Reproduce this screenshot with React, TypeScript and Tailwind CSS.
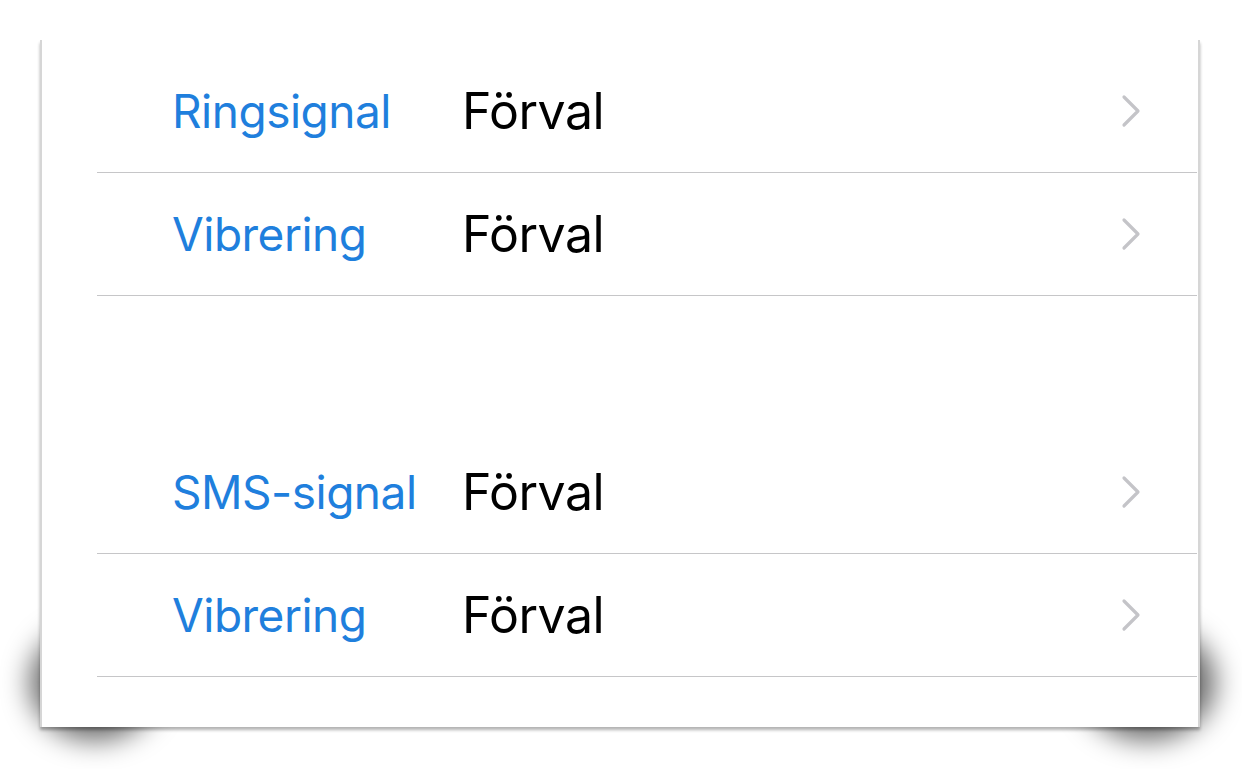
import React from "react";

const Chevron = () => (
  <svg width="26" height="36" viewBox="0 0 26 36" className="shrink-0">
    <path d="M7 4 L21 18 L7 32" fill="none" stroke="#c4c4c8" strokeWidth="3.2" strokeLinecap="round" strokeLinejoin="round" />
  </svg>
);

const Row = ({ label }: { label: string }) => (
  <div className="flex items-center h-[123px] pl-[75px] pr-[54px] border-b border-[#c6c6c8]">
    <span className="w-[290px] text-[#1f7fdd] text-[46px] tracking-[-0.5px]">{label}</span>
    <span className="flex-1 text-black text-[50px] tracking-[-0.5px]">Förval</span>
    <Chevron />
  </div>
);

export default function App() {
  return (
    <div
      className="relative w-[1242px] h-[769px] bg-white overflow-hidden"
      style={{ fontFamily: "Inter, 'Noto Sans', sans-serif" }}
    >
      {/* curled page shadows */}
      <div className="absolute left-[30px] top-[625px] w-[130px] h-[115px] rounded-[50%] bg-black/60 blur-[14px]" />
      <div className="absolute left-[1080px] top-[625px] w-[135px] h-[115px] rounded-[50%] bg-black/60 blur-[14px]" />
      <div className="relative ml-[40px] mt-[40px] w-[1160px] h-[687px] bg-white border-l-[2px] border-r-[2px] border-[#d6d6d6] shadow-[0_3px_3px_rgba(0,0,0,0.3)] pt-[10px]">
        <div className="ml-[55px] mr-[1px]">
          <Row label="Ringsignal" />
          <Row label="Vibrering" />
          <div className="h-[135px]" />
          <Row label="SMS-signal" />
          <Row label="Vibrering" />
        </div>
      </div>
    </div>
  );
}
